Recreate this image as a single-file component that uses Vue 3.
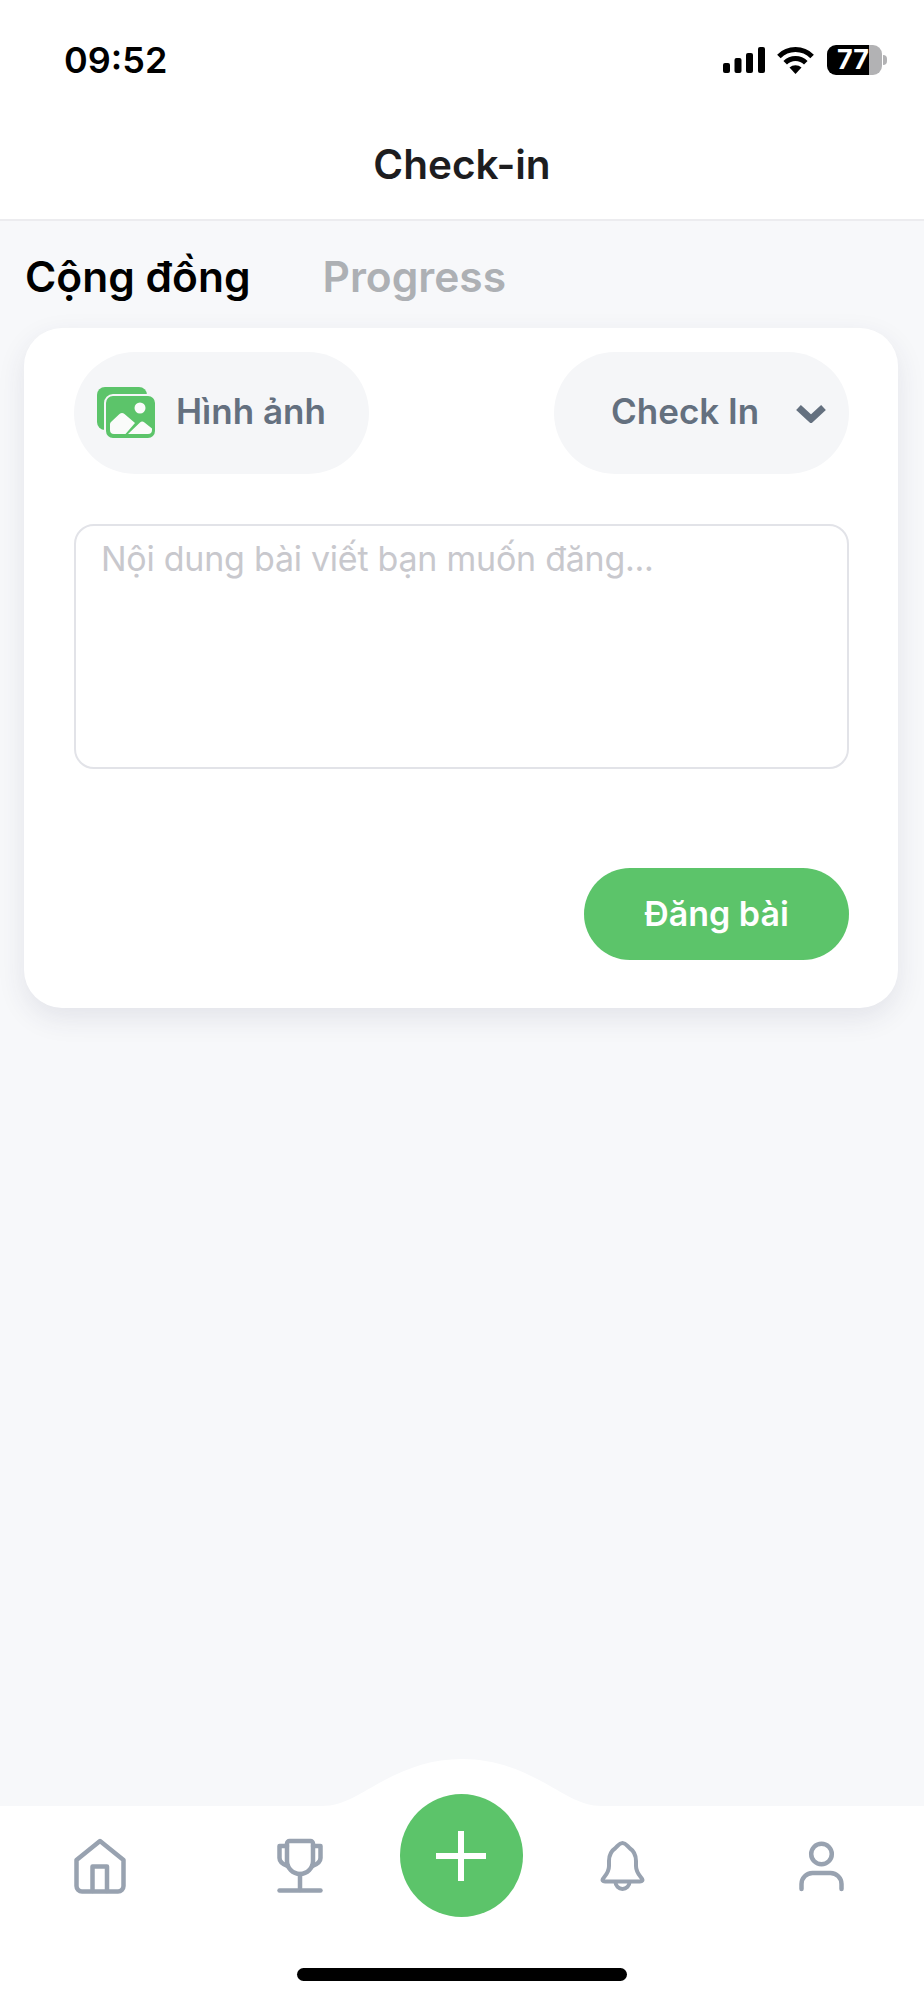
<script setup>
import { ref } from 'vue';

const tabs = ['Cộng đồng', 'Progress'];
const activeTab = ref(0);
const bars = [
  { x: 0, h: 10 },
  { x: 11.5, h: 15 },
  { x: 23, h: 20 },
  { x: 35, h: 26 }
];
</script>

<template>
  <div class="page">
    <header class="top">
      <div class="status">
        <span class="time">09:52</span>
        <div class="status-icons">
          <svg class="signal" width="42" height="26" viewBox="0 0 42 26">
            <rect v-for="b in bars" :key="b.x" :x="b.x" :y="26 - b.h" width="7" :height="b.h" rx="2" fill="#000" />
          </svg>
          <svg class="wifi" width="37" height="27" viewBox="0 0 37 27">
            <path d="M1.9 9.4A23.5 23.5 0 0 1 35.1 9.4" fill="none" stroke="#000" stroke-width="5" />
            <path d="M8.2 15.8A14.5 14.5 0 0 1 28.8 15.8" fill="none" stroke="#000" stroke-width="5" />
            <path d="M18.5 27L12.5 20.5A9 9 0 0 1 24.5 20.5Z" fill="#000" />
          </svg>
          <div class="battery">
            <span class="battery-level">77</span>
          </div>
          <span class="battery-knob"></span>
        </div>
      </div>
      <div class="title">Check-in</div>
    </header>

    <main class="content">
      <div class="tabs">
        <span
          v-for="(tab, i) in tabs"
          :key="tab"
          class="tab"
          :class="{ active: activeTab === i }"
          @click="activeTab = i"
        >{{ tab }}</span>
      </div>

      <section class="card">
        <div class="card-top">
          <div class="pill">
            <svg class="image-icon" width="60" height="52" viewBox="0 0 60 52">
              <rect x="0" y="0" width="50" height="43" rx="8" fill="#5cc46a" />
              <rect x="8" y="8" width="51" height="44" rx="8" fill="#5cc46a" stroke="#f5f6f8" stroke-width="2" />
              <circle cx="43" cy="21" r="5.5" fill="#fafbfa" />
              <path d="M13 37Q13 35.500 14.500 34.500L22.500 27Q25 25 27.500 27L38 36L28.500 47H17Q13 47 13 43Z" fill="#fafbfa" />
              <path d="M31 47L43 35.500Q45 33.500 47.500 35.500L55 41.500V43Q55 47 51 47Z" fill="#fafbfa" />
            </svg>
            <span class="pill-text">Hình ảnh</span>
          </div>
          <div class="pill pill-select">
            <span class="pill-text">Check In</span>
            <svg class="chevron" width="30" height="19" viewBox="0 0 30 19">
              <path d="M2.5 3.5L15 15L27.500 3.500" fill="none" stroke="#64707f" stroke-width="7" />
            </svg>
          </div>
        </div>

        <div class="textarea">Nội dung bài viết bạn muốn đăng...</div>

        <div class="card-bottom">
          <button class="submit">Đăng bài</button>
        </div>
      </section>
    </main>

    <nav class="nav">
      <svg class="bump" width="280" height="48" viewBox="0 0 280 48">
        <path d="M0 48V47C22 47 40 33 61 22C85 9 110 0 140 0C170 0 195 9 219 22C240 33 258 47 280 47V48Z" fill="#fff" />
      </svg>
      <div class="nav-row">
        <svg class="nav-icon" width="64" height="64" viewBox="0 0 64 64">
          <path d="M8.500 26L32 7L55.500 26V52A5.500 5.500 0 0 1 50 57.500H14A5.500 5.500 0 0 1 8.500 52Z" />
          <path d="M24.500 57V32.500H39V57" />
        </svg>
        <svg class="nav-icon" width="64" height="64" viewBox="0 0 64 64">
          <path d="M21.500 7H42.500A2.500 2.500 0 0 1 45 9.500V27A13 13 0 0 1 19 27V9.500A2.500 2.500 0 0 1 21.500 7Z" />
          <path d="M19 12H11.500V24C11.500 27.500 14 30 19.800 32" />
          <path d="M45 12H52.500V24C52.500 27.500 50 30 44.200 32" />
          <path d="M32 40V56" />
          <path d="M11.500 56.500H52.500" />
        </svg>
        <button class="plus" aria-label="add">
          <svg width="50" height="50" viewBox="0 0 50 50">
            <path d="M25 0V50M0 25H50" stroke="#fff" stroke-width="6" fill="none" />
          </svg>
        </button>
        <svg class="nav-icon thin" width="64" height="64" viewBox="0 0 64 64">
          <path d="M31.500 9C28 9 27 12 24.500 14C20 17 18 21 18 27V32C18 38 15 41 12.500 44C10.500 46.500 12 47.500 14 47.500H49C51 47.500 52.500 46.500 50.500 44C48 41 45 38 45 32V27C45 21 43 17 38.500 14C36 12 35 9 31.500 9Z" />
          <path d="M24.500 48A7 7 0 0 0 38.500 48" />
        </svg>
        <svg class="nav-icon" width="64" height="64" viewBox="0 0 64 64">
          <circle cx="32.500" cy="20" r="10.300" />
          <path d="M12.500 55V50A11 11 0 0 1 23.500 39H41.500A11 11 0 0 1 52.500 50V55" />
        </svg>
      </div>
      <div class="home-bar"></div>
    </nav>
  </div>
</template>

<style scoped>
.page {
  display: flex;
  flex-direction: column;
  height: 2000px;
  background: #f7f8fa;
  font-family: Inter, "Noto Sans", sans-serif;
  color: #1d1d1f;
}

.top {
  background: #fff;
  border-bottom: 2px solid #ececef;
}

.status {
  display: flex;
  align-items: center;
  justify-content: space-between;
  height: 120px;
  padding: 0 37px 0 64px;
}

.time {
  font-size: 36px;
  font-weight: 600;
  color: #000;
}

.status-icons {
  display: flex;
  align-items: center;
}

.wifi {
  margin-left: 12px;
}

.battery {
  display: flex;
  align-items: center;
  width: 55px;
  height: 30px;
  margin-left: 13px;
  padding-left: 10px;
  box-sizing: border-box;
  border-radius: 9px;
  background: linear-gradient(to right, #000 42px, #b2b2b4 42px);
}

.battery-level {
  font-size: 27px;
  font-weight: 700;
  line-height: 30px;
  color: #fff;
}

.battery-knob {
  width: 4px;
  height: 10px;
  margin-left: 1px;
  border-radius: 0 5px 5px 0;
  background: #b2b2b4;
}

.title {
  height: 99px;
  padding-bottom: 10px;
  box-sizing: border-box;
  text-align: center;
  line-height: 90px;
  font-size: 40.5px;
  font-weight: 600;
}

.content {
  flex: 1;
}

.tabs {
  display: flex;
  gap: 72px;
  height: 107px;
  padding-left: 25px;
  box-sizing: border-box;
  line-height: 111px;
}

.tab {
  font-size: 42.5px;
  font-weight: 600;
  color: #adb0b4;
  cursor: pointer;
}

.tab.active {
  color: #000;
}

.card {
  margin: 0 26px 0 24px;
  padding: 24px 49px 48px 50px;
  border-radius: 38px;
  background: #fff;
  box-shadow: 0 10px 28px rgba(50, 50, 90, 0.1);
}

.card-top {
  display: flex;
  justify-content: space-between;
}

.pill {
  display: flex;
  align-items: center;
  width: 295px;
  height: 122px;
  padding-left: 23px;
  padding-bottom: 4px;
  box-sizing: border-box;
  border-radius: 61px;
  background: #f5f6f8;
}

.pill-select {
  padding-left: 57px;
}

.pill-text {
  font-size: 35px;
  font-weight: 600;
  color: #64707f;
}

.image-icon {
  margin: 4px 19px 0 0;
}

.chevron {
  margin: 4px 0 0 37px;
}

.textarea {
  height: 245px;
  margin-top: 50px;
  padding: 11px 25px;
  box-sizing: border-box;
  border: 2.5px solid #e2e3e8;
  border-radius: 20px;
  font-size: 34px;
  line-height: 44px;
  letter-spacing: -0.25px;
  color: #c8c8cd;
}

.card-bottom {
  display: flex;
  justify-content: flex-end;
  margin-top: 99px;
}

.submit {
  width: 265px;
  height: 92px;
  padding: 0 0 2px;
  border: none;
  border-radius: 46px;
  background: #5cc46a;
  color: #fff;
  font-family: inherit;
  font-size: 34px;
  font-weight: 600;
  cursor: pointer;
}

.nav {
  position: relative;
  height: 194px;
  background: #fff;
}

.bump {
  position: absolute;
  left: 322px;
  top: -47px;
}

.nav-row {
  display: grid;
  grid-template-columns: 200px 199px 124px 199px 198px;
  grid-template-rows: 64px;
  justify-items: center;
  padding-top: 28px;
}

.nav-icon {
  fill: none;
  stroke: #98a2b0;
  stroke-width: 4.5;
  stroke-linecap: round;
  stroke-linejoin: round;
}

.nav-icon.thin {
  stroke-width: 4;
}

.plus {
  position: relative;
  display: flex;
  align-items: center;
  justify-content: center;
  width: 123px;
  height: 123px;
  margin-top: -40px;
  padding: 0;
  border: none;
  border-radius: 50%;
  background: #5cc46a;
  cursor: pointer;
}

.home-bar {
  width: 330px;
  height: 13px;
  margin: 70px auto 0;
  border-radius: 7px;
  background: #000;
}
</style>

<style>
html,
body {
  margin: 0;
  background: #f7f8fa;
}
</style>
